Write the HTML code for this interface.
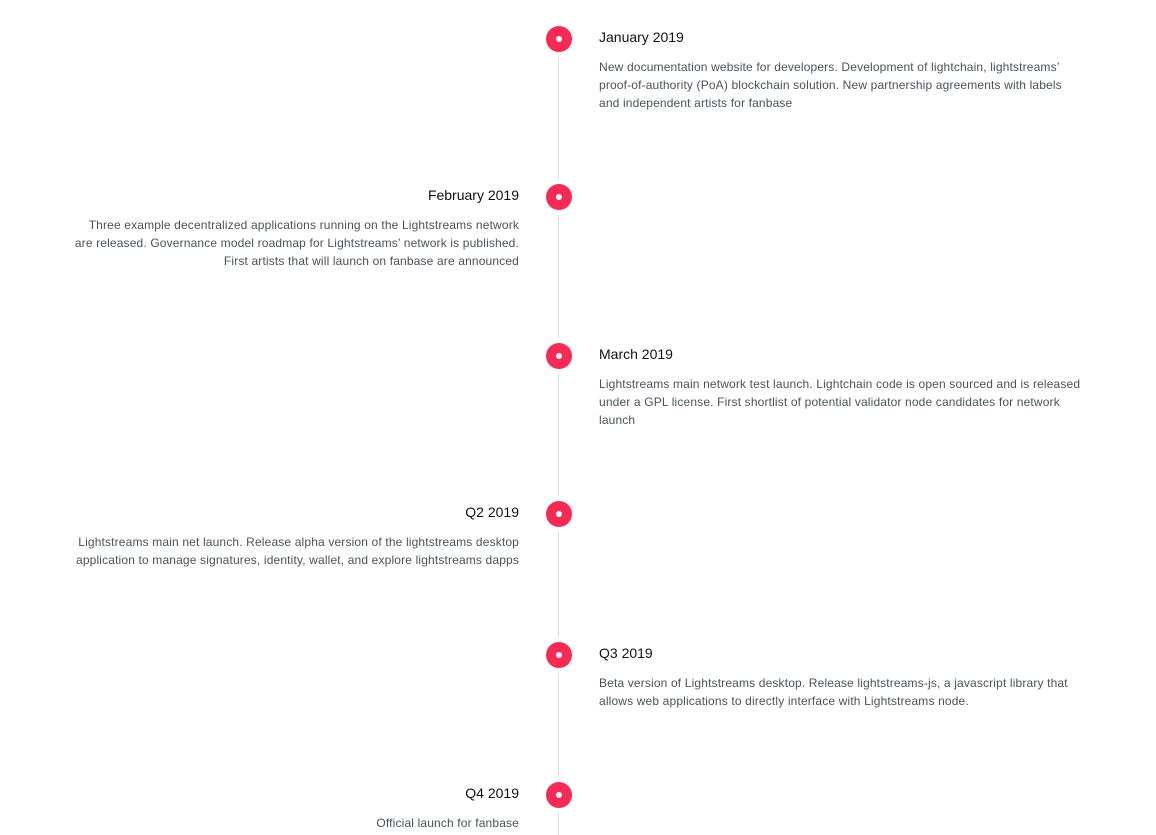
<!DOCTYPE html>
<html><head><style>
body{margin:0;width:1156px;height:835px;overflow:hidden;background:#fff;font-family:"Liberation Sans",Arial,sans-serif;position:relative}
.line{position:absolute;left:558px;width:1px;background:#dcdcdc}
.dot{position:absolute;left:546px;width:26px;height:26px;border-radius:50%;background:#f52a55;box-shadow:0 0 0 5px #fff}
.dot:after{content:"";position:absolute;left:10px;top:10px;width:6px;height:6px;border-radius:50%;background:#fff}
.it{position:absolute;width:520px;white-space:nowrap}
.it.r{left:599px}
.it.l{left:-1px;text-align:right}
.it h3{margin:0;font-size:14px;font-weight:normal;color:#111;line-height:18px}
.it p{margin:12px 0 0;font-size:12px;line-height:18px;color:#4a525c;letter-spacing:0.15px}
</style></head><body>
<div class="line" style="top:52px;height:783px"></div>
<div class="dot" style="top:26px"></div>
<div class="dot" style="top:184px"></div>
<div class="dot" style="top:343px"></div>
<div class="dot" style="top:501px"></div>
<div class="dot" style="top:642px"></div>
<div class="dot" style="top:782px"></div>

<div class="it r" style="top:28px"><h3>January 2019</h3><p>New documentation website for developers. Development of lightchain, lightstreams’<br>proof-of-authority (PoA) blockchain solution. New partnership agreements with labels<br>and independent artists for fanbase</p></div>
<div class="it l" style="top:186px"><h3>February 2019</h3><p>Three example decentralized applications running on the Lightstreams network<br>are released. Governance model roadmap for Lightstreams’ network is published.<br>First artists that will launch on fanbase are announced</p></div>
<div class="it r" style="top:345px"><h3>March 2019</h3><p>Lightstreams main network test launch. Lightchain code is open sourced and is released<br>under a GPL license. First shortlist of potential validator node candidates for network<br>launch</p></div>
<div class="it l" style="top:503px"><h3>Q2 2019</h3><p>Lightstreams main net launch. Release alpha version of the lightstreams desktop<br>application to manage signatures, identity, wallet, and explore lightstreams dapps</p></div>
<div class="it r" style="top:644px"><h3>Q3 2019</h3><p>Beta version of Lightstreams desktop. Release lightstreams-js, a javascript library that<br>allows web applications to directly interface with Lightstreams node.</p></div>
<div class="it l" style="top:784px"><h3>Q4 2019</h3><p>Official launch for fanbase</p></div>
</body></html>
